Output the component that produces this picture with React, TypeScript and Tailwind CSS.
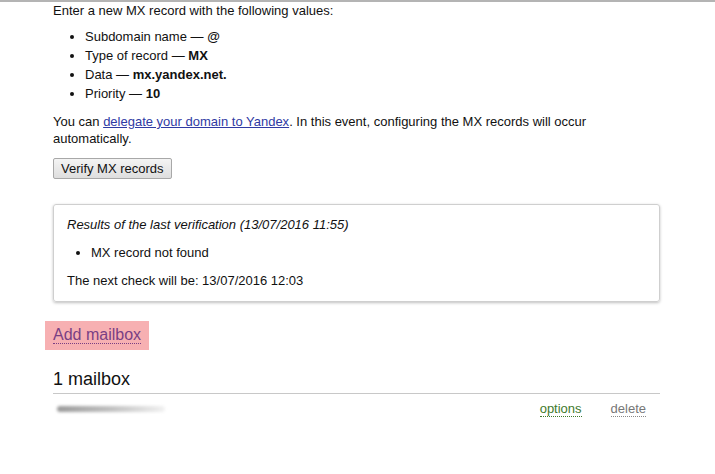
import React from "react";

export default function App() {
  return (
    <div className="w-[715px] h-[474px] bg-white border-t-2 border-[#b4b4b4] text-[13px] leading-[17px] text-[#111]" style={{ fontFamily: '"Liberation Sans", Arial, sans-serif' }}>
      <div className="pl-[53px] pr-[55px] pt-0">
        <p>Enter a new MX record with the following values:</p>
        <ul className="mt-[9px] pl-[32px] list-disc flex flex-col gap-[2px]">
          <li>Subdomain name — <b>@</b></li>
          <li>Type of record — <b>MX</b></li>
          <li>Data — <b>mx.yandex.net.</b></li>
          <li>Priority — <b>10</b></li>
        </ul>
        <p className="mt-[11px]">
          You can <a className="text-[#2f3aa3] underline" href="#">delegate your domain to Yandex</a>. In this event, configuring the MX records will occur automatically.
        </p>
        <button className="mt-[11px] h-[21px] px-[7px] border border-[#a8a8a8] rounded-[2px] bg-gradient-to-b from-[#f4f4f4] to-[#dedede] text-[13px] leading-[17px] text-[#111]">
          Verify MX records
        </button>
        <div className="mt-[25px] w-[607px] border border-[#cfcfcf] rounded-[3px] shadow-[0_1px_3px_rgba(0,0,0,0.25)] px-[13px] pt-[11px] pb-[12px]">
          <p className="italic">Results of the last verification (13/07/2016 11:55)</p>
          <ul className="mt-[11px] pl-[24px] list-disc">
            <li>MX record not found</li>
          </ul>
          <p className="mt-[11px]">The next check will be: 13/07/2016 12:03</p>
        </div>
        <div className="mt-[19px] -ml-[8px]">
          <span className="inline-block bg-[#f7b0b2] px-[8px] pt-[4px] pb-[6px] text-[16px] leading-[19px]">
            <a href="#" className="text-[#7a3f84] border-b border-dotted border-[#7a3f84]">Add mailbox</a>
          </span>
        </div>
        <div className="mt-[18px] w-[607px] border-b border-[#c8c8c8] text-[18px] leading-[22px] pb-[3px]">1 mailbox</div>
        <div className="w-[607px] flex items-center h-[30px]">
          <div className="ml-[4px] w-[108px] h-[6px] rounded-full bg-gradient-to-r from-[#9a9a9a] via-[#c0c0c0] to-[#f2f2f2] blur-[1.5px]" />
          <div className="ml-auto flex gap-[29px] pr-[14px]">
            <a href="#" className="text-[#3f7a2c] border-b border-dotted border-[#3f7a2c] leading-[15px]">options</a>
            <a href="#" className="text-[#777] border-b border-dotted border-[#888] leading-[15px]">delete</a>
          </div>
        </div>
      </div>
    </div>
  );
}
